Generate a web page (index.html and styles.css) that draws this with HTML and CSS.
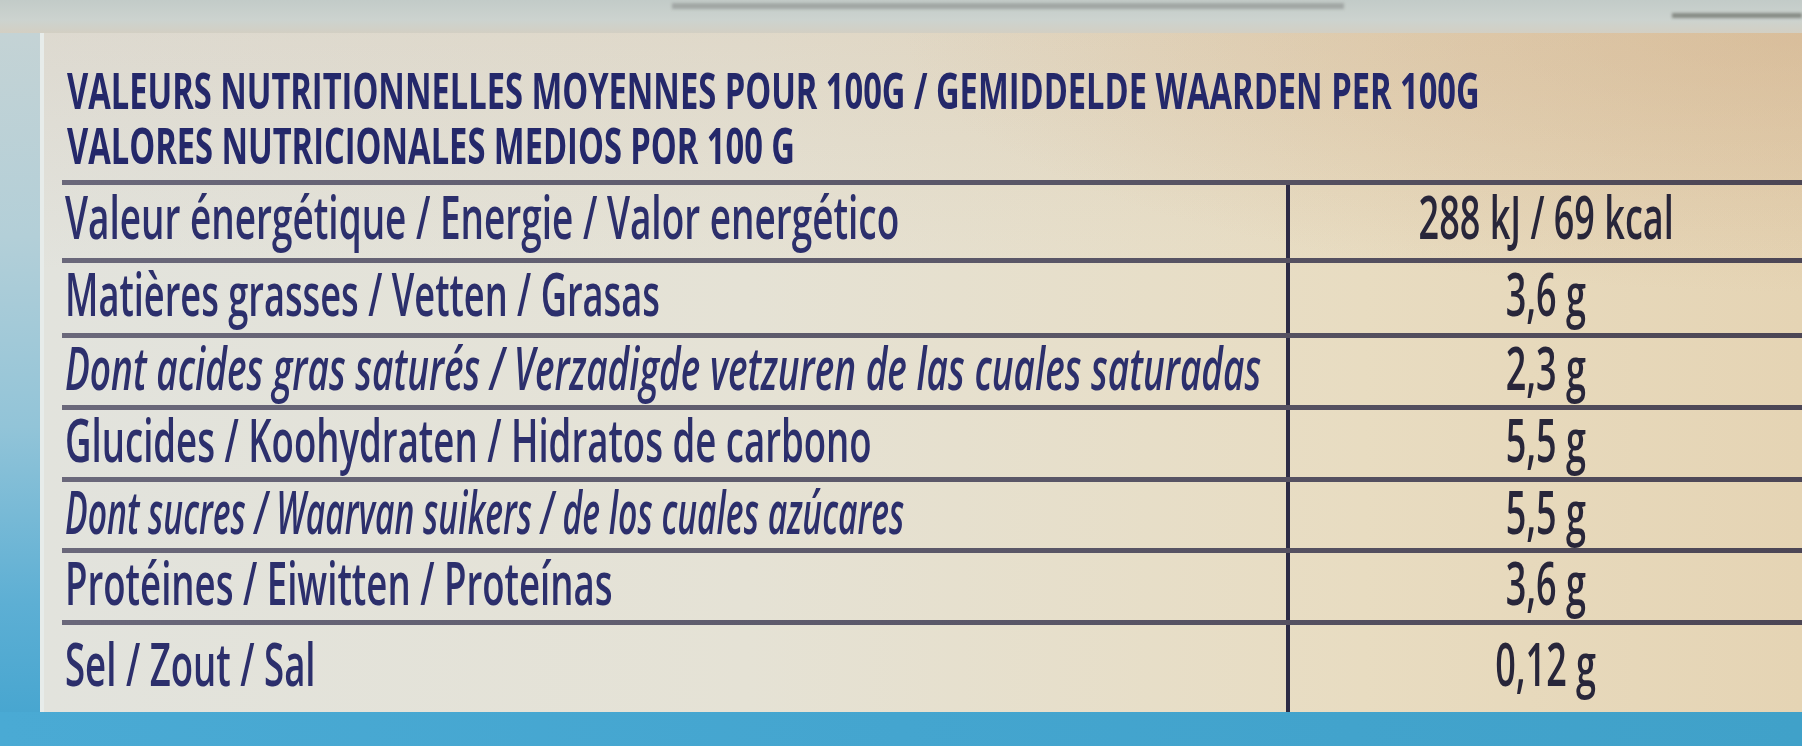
FILE: index.html
```html
<!DOCTYPE html>
<html lang="fr">
<head>
<meta charset="utf-8">
<title>Valeurs nutritionnelles</title>
<link rel="stylesheet" href="styles.css">
</head>
<body>
<div class="photo">
  <div class="top-strip">
    <span class="top-bar"></span>
    <span class="top-bar-right"></span>
  </div>
  <div class="middle">
    <div class="side-strip"></div>
    <div class="label">
      <div class="heading">
        <div class="hline"><span>VALEURS NUTRITIONNELLES MOYENNES POUR 100G / GEMIDDELDE WAARDEN PER 100G</span></div>
        <div class="hline"><span>VALORES NUTRICIONALES MEDIOS POR 100 G</span></div>
      </div>
      <div class="table">
        <div class="row">
          <div class="name wide"><span>Valeur énergétique / Energie / Valor energético</span></div>
          <div class="val"><span>288 kJ / 69 kcal</span></div>
        </div>
        <div class="row">
          <div class="name narrow"><span>Matières grasses / Vetten / Grasas</span></div>
          <div class="val"><span>3,6 g</span></div>
        </div>
        <div class="row">
          <div class="name italic"><span>Dont acides gras saturés / Verzadigde vetzuren de las cuales saturadas</span></div>
          <div class="val"><span>2,3 g</span></div>
        </div>
        <div class="row">
          <div class="name"><span>Glucides / Koohydraten / Hidratos de carbono</span></div>
          <div class="val"><span>5,5 g</span></div>
        </div>
        <div class="row">
          <div class="name italic tight"><span>Dont sucres / Waarvan suikers / de los cuales azúcares</span></div>
          <div class="val"><span>5,5 g</span></div>
        </div>
        <div class="row">
          <div class="name"><span>Protéines / Eiwitten / Proteínas</span></div>
          <div class="val"><span>3,6 g</span></div>
        </div>
        <div class="row">
          <div class="name"><span>Sel / Zout / Sal</span></div>
          <div class="val"><span>0,12 g</span></div>
        </div>
      </div>
    </div>
  </div>
  <div class="bottom-band"></div>
</div>
</body>
</html>
```
FILE: styles.css
```css
html, body {
  margin: 0;
  padding: 0;
  background: #c9d3d2;
  overflow: hidden;
}

.photo {
  width: 1802px;
  height: 746px;
  display: flex;
  flex-direction: column;
  overflow: hidden;
  font-family: "Open Sans", "Noto Sans", sans-serif;
}

.top-strip {
  height: 33px;
  flex: none;
  display: flex;
  align-items: flex-start;
  background: linear-gradient(to bottom, #c2cbc8 0%, #ccd3cf 60%, #d3cfc3 100%);
}

.top-bar {
  margin-left: 672px;
  margin-top: 3px;
  width: 672px;
  height: 6px;
  background: #a1a6a4;
  filter: blur(1.5px);
}

.top-bar-right {
  margin-left: auto;
  margin-top: 13px;
  width: 130px;
  height: 5px;
  background: #868a84;
  filter: blur(1.5px);
}

.middle {
  flex: 1;
  display: flex;
  min-height: 0;
}

.side-strip {
  width: 40px;
  flex: none;
  background: linear-gradient(to bottom, #c4d3d5 0%, #b3cfd8 30%, #92c4d8 58%, #5dafd4 84%, #48a6d0 100%);
}

.label {
  flex: 1;
  min-width: 0;
  display: flex;
  flex-direction: column;
  border-left: 4px solid #e7ecea;
  background:
    radial-gradient(ellipse 900px 260px at 100% 0%, rgba(205, 165, 125, 0.38) 0%, rgba(205, 165, 125, 0) 100%),
    linear-gradient(to bottom, rgba(196, 168, 140, 0.16) 0%, rgba(196, 168, 140, 0) 35%),
    linear-gradient(to right, #e2e3dd 0%, #e5e2d5 40%, #e8dcc1 75%, #e5d4b4 100%);
}

.heading {
  padding: 30px 0 7px 23px;
  color: #24286a;
  font-weight: 700;
  font-size: 50px;
  line-height: 55px;
  filter: blur(0.7px);
}

.hline span {
  display: inline-block;
  white-space: nowrap;
  transform: scaleX(0.653);
  transform-origin: left center;
}

.table {
  margin-left: 18px;
  flex: 1;
  min-width: 0;
  display: grid;
  grid-template-columns: minmax(0, 1fr);
  grid-template-rows: 78px 75px 72px 72px 71px 72px 1fr;
  filter: blur(0.7px);
}

.row {
  display: grid;
  grid-template-columns: 1224px minmax(0, 1fr);
  border-top: 5px solid #5b596b;
  border-image: linear-gradient(to right, #6a687a 0%, #5b5869 50%, #4c4655 100%) 1;
  min-height: 0;
  min-width: 0;
}

.name {
  display: flex;
  align-items: center;
  padding: 0 0 10px 3px;
  color: #2c2f6c;
  font-size: 59px;
  line-height: 59px;
  font-weight: 600;
  min-width: 0;
}

.name span {
  display: inline-block;
  white-space: nowrap;
  transform: scaleX(0.62);
  transform-origin: left center;
}

.wide span {
  transform: scaleX(0.626);
}

.narrow span {
  transform: scaleX(0.614);
}

.italic {
  font-style: italic;
}

.italic span {
  transform: scaleX(0.627);
}

.tight span {
  transform: scaleX(0.571);
}

.val {
  border-left: 4px solid #2d2b45;
  display: flex;
  justify-content: center;
  align-items: center;
  padding-bottom: 10px;
  color: #28263a;
  font-size: 59px;
  line-height: 59px;
  font-weight: 600;
  min-width: 0;
}

.val span {
  display: inline-block;
  white-space: nowrap;
  transform: scaleX(0.61);
  transform-origin: center center;
}

.bottom-band {
  height: 34px;
  flex: none;
  background: linear-gradient(to right, #4aaad4 0%, #44a5cf 50%, #40a1c9 100%);
}
```
